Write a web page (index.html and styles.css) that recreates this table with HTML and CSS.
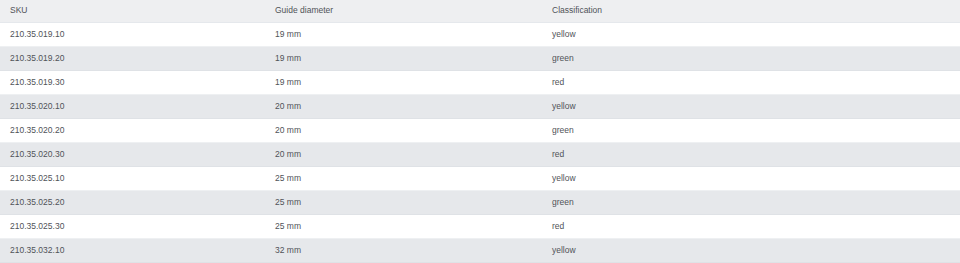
FILE: index.html
```html
<!DOCTYPE html>
<html>
<head>
<meta charset="utf-8">
<link rel="stylesheet" href="styles.css">
</head>
<body>
<table class="spec">
  <colgroup>
    <col class="c1"><col class="c2"><col class="c3">
  </colgroup>
  <thead>
    <tr><th>SKU</th><th>Guide diameter</th><th>Classification</th></tr>
  </thead>
  <tbody>
    <tr><td>210.35.019.10</td><td>19 mm</td><td>yellow</td></tr>
    <tr><td>210.35.019.20</td><td>19 mm</td><td>green</td></tr>
    <tr><td>210.35.019.30</td><td>19 mm</td><td>red</td></tr>
    <tr><td>210.35.020.10</td><td>20 mm</td><td>yellow</td></tr>
    <tr><td>210.35.020.20</td><td>20 mm</td><td>green</td></tr>
    <tr><td>210.35.020.30</td><td>20 mm</td><td>red</td></tr>
    <tr><td>210.35.025.10</td><td>25 mm</td><td>yellow</td></tr>
    <tr><td>210.35.025.20</td><td>25 mm</td><td>green</td></tr>
    <tr><td>210.35.025.30</td><td>25 mm</td><td>red</td></tr>
    <tr><td>210.35.032.10</td><td>32 mm</td><td>yellow</td></tr>
  </tbody>
</table>
</body>
</html>
```
FILE: styles.css
```css
html, body {
  margin: 0;
  padding: 0;
  background: #ffffff;
}
.spec {
  width: 960px;
  border-collapse: collapse;
  table-layout: fixed;
  font-family: "Liberation Sans", Arial, sans-serif;
  font-size: 8.5px;
  line-height: 11px;
  color: #505358;
}
.c1 { width: 265px; }
.c2 { width: 277px; }
.c3 { width: 418px; }
.spec th {
  font-weight: normal;
  text-align: left;
  padding: 5px 0 6px 10px;
  background: #eeeff1;
  border-bottom: 1px solid #e5e8ec;
}
.spec td {
  padding: 6px 0 6px 10px;
  border-bottom: 1px solid #eef0f2;
}
.spec tbody tr:nth-child(even) td {
  background: #e6e8eb;
  border-bottom-color: #dfe2e6;
}
```
